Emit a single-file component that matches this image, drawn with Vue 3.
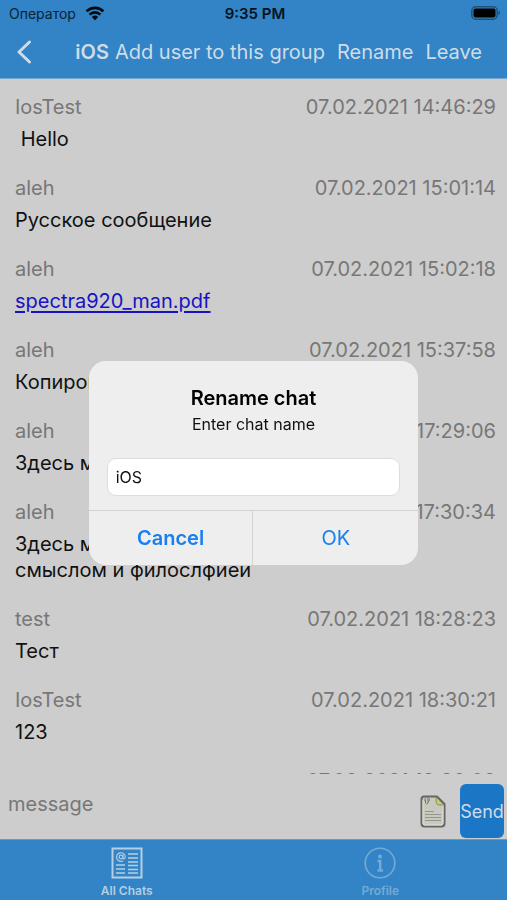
<script setup>
import { ref } from 'vue'

const messages = [
  { author: 'IosTest', time: '07.02.2021 14:46:29', text: ' Hello' },
  { author: 'aleh', time: '07.02.2021 15:01:14', text: 'Русское сообщение' },
  { author: 'aleh', time: '07.02.2021 15:02:18', file: 'spectra920_man.pdf' },
  { author: 'aleh', time: '07.02.2021 15:37:58', text: 'Копирование' },
  { author: 'aleh', time: '07.02.2021 17:29:06', text: 'Здесь могло быть сообщение' },
  { author: 'aleh', time: '07.02.2021 17:30:34', text: 'Здесь могло быть сообщение со\nсмыслом и филослфией' },
  { author: 'test', time: '07.02.2021 18:28:23', text: 'Тест' },
  { author: 'IosTest', time: '07.02.2021 18:30:21', text: '123' },
  { author: 'user', time: '07.02.2021 18:36:08', text: 'Тест' },
]

const draft = ref('')
const chatName = ref('iOS')
</script>

<template>
  <div class="app">
    <header class="top">
      <div class="status">
        <span class="carrier">
          Оператор
          <svg class="wifi" width="20" height="15" viewBox="0 0 20 15" aria-hidden="true">
            <path d="M1.6 5.3a12 12 0 0 1 16.8 0" />
            <path d="M4.6 8.6a7.6 7.6 0 0 1 10.8 0" />
            <path class="dot" d="M10 14.2l-3.2-3.3a4.6 4.6 0 0 1 6.4 0z" />
          </svg>
        </span>
        <span class="clock">9:35 PM</span>
        <svg class="battery" width="30" height="14" viewBox="0 0 30 14" aria-hidden="true">
          <rect class="shell" x="0.8" y="0.8" width="25.4" height="12.4" rx="4" />
          <rect x="2.5" y="2.5" width="22" height="9" rx="2" />
          <path class="cap" d="M27.5 4.8c2 .6 2 3.8 0 4.400z" />
        </svg>
      </div>
      <nav class="nav">
        <button class="back" type="button" aria-label="Back">
          <svg width="16" height="24" viewBox="0 0 16 24" aria-hidden="true">
            <path d="M13.500 2L3 12l10.500 10" />
          </svg>
        </button>
        <h1 class="title">iOS</h1>
        <button class="add" type="button">Add user to this group</button>
        <button class="rename" type="button">Rename</button>
        <button type="button">Leave</button>
      </nav>
    </header>

    <main class="messages">
      <article v-for="(m, i) in messages" :key="i" class="message">
        <div class="meta">
          <span>{{ m.author }}</span>
          <time>{{ m.time }}</time>
        </div>
        <a v-if="m.file" class="body" href="#">{{ m.file }}</a>
        <p v-else class="body">{{ m.text }}</p>
      </article>
    </main>

    <form class="composer" @submit.prevent>
      <input v-model="draft" class="draft" type="text" placeholder="message" aria-label="message" />
      <button class="attach" type="button" aria-label="Attach file">
        <svg width="26" height="33" viewBox="0 0 26 33" aria-hidden="true">
          <path class="sheet" d="M4 1.500H17L24.500 9V28.500Q24.500 31.500 21.500 31.500H4.500Q1.500 31.500 1.500 28.500V4.500Q1.500 1.500 4 1.500Z" />
          <path class="inner" d="M16 3L23 10V28Q23 30 21 30H5Q3 30 3 28V5" />
          <path class="fold" d="M16 2L24 10H18Q15.500 9 16 2Z" />
          <path class="clip" d="M5 6V3.500Q6.500 1 8 3.500V8Q6.500 10 5.500 8V5M8 7Q10 6.500 9 3" />
          <path class="lines" d="M5 16.500h9M5 19.500h16M5 22.500h16M5 25.500h16" />
        </svg>
      </button>
      <button class="send" type="submit">Send</button>
    </form>

    <nav class="tabs">
      <a class="tab" href="#">
        <svg width="32" height="32" viewBox="0 0 32 32" aria-hidden="true">
          <rect x="1.500" y="1.500" width="29" height="29" />
          <circle class="thin" cx="10" cy="10" r="1.800" />
          <path class="thin" d="M11.800 8v2.800q0 1.200 1.100 1.200 1.300-.2 1.300-2A4.300 4.300 0 1 0 12.200 13.700" />
          <path class="rows" d="M17 7h10M17 11h10M17 15h10M5 18h9M17 18.500h10M5 22h9M17 22.500h10M5 26h9M17 26h10" />
        </svg>
        <span>All Chats</span>
      </a>
      <a class="tab inactive" href="#">
        <svg width="32" height="32" viewBox="0 0 32 32" aria-hidden="true">
          <circle cx="16" cy="16" r="14.800" />
          <circle class="fill" cx="16" cy="9.500" r="2" />
          <path class="stem" d="M13.500 14H16.200V23M13.500 23.500H19" />
        </svg>
        <span>Profile</span>
      </a>
    </nav>

    <div class="overlay">
      <form class="dialog" role="dialog" aria-labelledby="dialog-title" @submit.prevent>
        <div class="content">
          <h2 id="dialog-title">Rename chat</h2>
          <label for="chat-name">Enter chat name</label>
          <input id="chat-name" v-model="chatName" type="text" />
        </div>
        <div class="actions">
          <button class="cancel" type="button">Cancel</button>
          <button type="submit">OK</button>
        </div>
      </form>
    </div>
  </div>
</template>

<style>
body {
  margin: 0;
  background: #cdcdcd;
}
</style>

<style scoped>
.app {
  display: flex;
  flex-direction: column;
  height: 100vh;
  background: #cdcdcd;
  color: #111;
  font-family: Inter, "Liberation Sans", sans-serif;
  font-size: 20px;
}

button,
input {
  border: 0;
  margin: 0;
  padding: 0;
  background: none;
  color: inherit;
  font: inherit;
}

svg {
  display: block;
  fill: none;
  stroke: currentColor;
}

.top {
  flex: none;
  background: #3284c6;
  border-bottom: 1px solid #78a6cb;
}

.status {
  display: grid;
  grid-template-columns: 1fr auto 1fr;
  align-items: center;
  height: 26px;
  padding: 0 6px 0 9px;
  color: #0b2236;
  font-size: 14px;
}

.carrier {
  display: flex;
  align-items: center;
  gap: 9px;
}

.wifi {
  color: #02070c;
  stroke-width: 2.600;
}

.wifi .dot {
  fill: currentColor;
  stroke: none;
}

.clock {
  color: #06121d;
  font-size: 15px;
  font-weight: 600;
}

.battery {
  justify-self: end;
  fill: #000;
  stroke: none;
}

.battery .shell {
  fill: none;
  stroke: #1f5279;
  stroke-width: 1.500;
}

.battery .cap {
  fill: #1f5279;
}

.nav {
  display: flex;
  align-items: center;
  height: 52px;
  padding: 0 25px 0 16px;
  color: #cfdce7;
  white-space: nowrap;
}

.back svg {
  stroke-width: 3;
  stroke-linecap: round;
  stroke-linejoin: round;
}

.title {
  margin: 0 6px 0 auto;
  font-size: 20px;
  font-weight: 600;
}

.add,
.rename {
  margin-right: 12px;
}

.messages {
  flex: 1;
  min-height: 0;
  overflow: hidden;
  padding: 15px 11px 0 15px;
}

.message {
  padding-bottom: 23px;
}

.meta {
  display: flex;
  justify-content: space-between;
  margin-bottom: 6px;
  line-height: 26px;
  color: #777;
}

.body {
  display: block;
  margin: 0;
  line-height: 26px;
  white-space: pre-wrap;
}

a.body {
  color: #1812c4;
  text-underline-offset: 3px;
}

.composer {
  display: flex;
  flex: none;
  align-items: center;
  height: 65px;
  padding: 0 3px 0 8px;
}

.draft {
  flex: 1;
  min-width: 0;
  height: 40px;
  margin-bottom: 5px;
  outline: 0;
}

.draft::placeholder {
  color: #777;
  opacity: 1;
}

.attach {
  margin: 9px 14px 0 8px;
}

.sheet {
  fill: #c9c9bf;
  stroke: #666;
  stroke-width: 2;
}

.inner {
  stroke: #e0e0d5;
}

.fold {
  fill: #c6ca78;
  stroke: #8f9159;
}

.clip {
  stroke: #777;
}

.lines {
  stroke: #969690;
}

.send {
  width: 44px;
  height: 54px;
  margin-top: 9px;
  border-radius: 6px;
  background: #1b77c6;
  color: #cfdce7;
  font-size: 18px;
}

.tabs {
  display: grid;
  flex: none;
  grid-template-columns: 1fr 1fr;
  height: 60px;
  border-top: 1px solid #6f97b8;
  background: #3284c6;
}

.tab {
  display: flex;
  flex-direction: column;
  align-items: center;
  gap: 4px;
  padding-top: 7px;
  color: #b5cee2;
  font-size: 12px;
  font-weight: 600;
  line-height: 16px;
  text-decoration: none;
}

.tab svg {
  stroke-width: 2;
}

.tab .thin {
  stroke-width: 1.200;
}

.tab .rows {
  stroke-width: 1.600;
}

.tab .fill {
  fill: currentColor;
  stroke: none;
}

.inactive {
  color: #75aad5;
}

.inactive svg {
  stroke-width: 1.600;
}

.tab .stem {
  stroke-width: 2.400;
}

.overlay {
  position: fixed;
  inset: 0;
  display: flex;
  align-items: center;
  justify-content: center;
  padding-top: 26px;
}

.dialog {
  width: 65%;
  overflow: hidden;
  border-radius: 17px;
  background: #eee;
}

.content {
  display: flex;
  flex-direction: column;
  padding: 24px 18px 14px;
  text-align: center;
}

.content h2 {
  margin: 0;
  color: #000;
  font-size: 20px;
  font-weight: 600;
  line-height: 26px;
}

.content label {
  font-size: 16px;
  line-height: 26px;
}

.content input {
  box-sizing: border-box;
  height: 38px;
  margin-top: 21px;
  padding: 0 8px;
  border: 1px solid #ddd;
  border-radius: 9px;
  background: #fff;
  font-size: 16px;
  outline: 0;
}

.actions {
  display: grid;
  grid-template-columns: 1fr 1fr;
  border-top: 1px solid #d3d3d3;
}

.actions button {
  height: 54px;
  color: #187fee;
}

.actions .cancel {
  border-right: 1px solid #d3d3d3;
  font-weight: 600;
}
</style>
